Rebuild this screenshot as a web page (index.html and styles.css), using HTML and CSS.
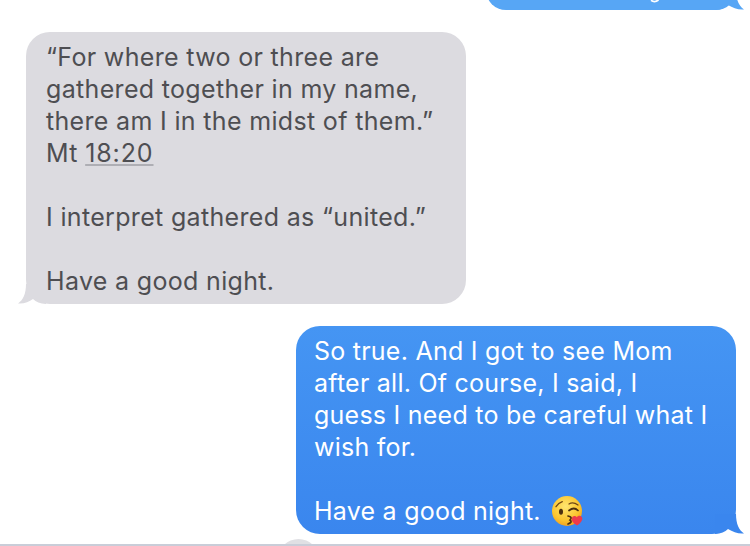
FILE: index.html
```html
<!DOCTYPE html>
<html lang="en">
<head>
<meta charset="utf-8" />
<title>Messages</title>
<link rel="stylesheet" href="styles.css">
</head>
<body>
<div class="thread">
  <div class="bubble sent sent-top">
    <!-- only the tail of a letter is left on screen -->
    <svg class="descender" width="10" height="3" viewBox="0 0 10 3"><path d="M1 0.300Q4.500 3 8.500 0" stroke="#ffffff" stroke-width="1.800" fill="none"/></svg>
    <svg class="tail tail-right" width="29" height="20" viewBox="0 0 29 20"><path d="M21 0C21 10 24 16 29 19.500C23 20 18 18 13 15C10 18 6 19.500 0 20L0 0Z" fill="#57a6f5"/></svg>
  </div>

  <div class="bubble received">
    <p>“For where two or three are<br>gathered together in my name,<br>there am I in the midst of them.”<br>Mt <span class="link">18:20</span></p>
    <p class="gap">I interpret gathered as “united.”</p>
    <p class="gap">Have a good night.</p>
    <svg class="tail tail-left" width="28" height="20" viewBox="0 0 28 20"><path d="M8 0C8 10 5 16 0 19.500C6 20 11 18 15 15C18 18 22 19.500 28 20L28 0Z" fill="#dcdbe0"/></svg>
  </div>

  <div class="bubble sent sent-main">
    <p>So true. And I got to see Mom<br>after all. Of course, I said, I<br>guess I need to be careful what I<br>wish for.</p>
    <p class="gap">Have a good night.<svg class="emoji" width="32" height="32" viewBox="0 0 32 32">
        <defs>
          <radialGradient id="face" cx="0.45" cy="0.35" r="0.7">
            <stop offset="0" stop-color="#fee570"/>
            <stop offset="0.65" stop-color="#fbc52f"/>
            <stop offset="1" stop-color="#ee9a1c"/>
          </radialGradient>
        </defs>
        <circle cx="16" cy="15" r="15" fill="url(#face)"/>
        <path d="M5 10.700Q7.500 7 11.300 5.700M18 8Q22 5.500 27 9" stroke="#6d4514" stroke-width="1.300" fill="none" stroke-linecap="round"/>
        <ellipse cx="10" cy="15.700" rx="2" ry="3" fill="#4c3010"/>
        <path d="M18 14.500Q23 10.500 27 14.500" stroke="#4c3010" stroke-width="1.700" fill="none" stroke-linecap="round"/>
        <path d="M17 20Q22 21 19 24Q22 26 17 28" stroke="#4c3010" stroke-width="1.700" fill="none" stroke-linecap="round"/>
        <path d="M26 29.500C22 27 20 24.500 20.800 22C21.600 19.500 24.500 19.300 25.800 21.300C27.200 19 30.500 19.300 31.200 21.800C31.800 24.500 29.500 27.500 26 29.500Z" fill="#ee3a4c"/>
      </svg></p>
    <svg class="tail tail-right" width="29" height="20" viewBox="0 0 29 20"><path d="M21 0C21 10 24 16 29 19.500C23 20 18 18 13 15C10 18 6 19.500 0 20L0 0Z" fill="#3a86ee"/></svg>
  </div>
</div>

<div class="input-bar"><span class="input-knob"></span></div>
</body>
</html>
```

FILE: styles.css
```css
html, body {
    margin: 0;
    height: 546px;
    overflow: hidden;
    background: #ffffff;
}

body {
    font-family: "Inter", "Liberation Sans", sans-serif;
    font-size: 25px;
    line-height: 32px;
    letter-spacing: 0.33px;
    position: relative;
}

p { margin: 0; }
p.gap { margin-top: 32px; }

.thread {
    display: flex;
    flex-direction: column;
    padding: 0 14px 0 26px;
}

.bubble {
    position: relative;
    border-radius: 24px;
    white-space: nowrap;
    box-sizing: border-box;
}

.received {
    align-self: flex-start;
    width: 440px;
    height: 272px;
    margin-top: 22px;
    padding: 9px 20px;
    background: #dcdbe0;
    color: #4e4e52;
}

.sent {
    align-self: flex-end;
    color: #ffffff;
    letter-spacing: 0.24px;
}

.sent-top {
    width: 250px;
    height: 40px;
    margin-top: -30px;
    background: #57a6f5;
}

.sent-main {
    width: 440px;
    height: 208px;
    margin-top: 22px;
    padding: 9px 18px;
    background: linear-gradient(#4595f3, #3a86ee);
}

.link {
    letter-spacing: 0.9px;
    text-decoration: underline;
    text-decoration-color: #aeaeb4;
    text-decoration-thickness: 1.5px;
    text-underline-offset: 2px;
}

.emoji {
    vertical-align: -8px;
    margin-left: 10px;
}

.descender {
    position: absolute;
    left: 164px;
    top: 30px;
}

.tail {
    position: absolute;
    bottom: 0;
}
.tail-right { right: -8px; }
.tail-left { left: -8px; }

.input-bar {
    position: absolute;
    left: 0;
    right: 0;
    bottom: 0;
    height: 7px;
    overflow: hidden;
    border-bottom: 2px solid #c9cdd8;
    box-sizing: border-box;
}
.input-knob {
    position: absolute;
    left: 278px;
    top: 0;
    width: 41px;
    height: 41px;
    border-radius: 50%;
    background: #e0e0e4;
}
```
